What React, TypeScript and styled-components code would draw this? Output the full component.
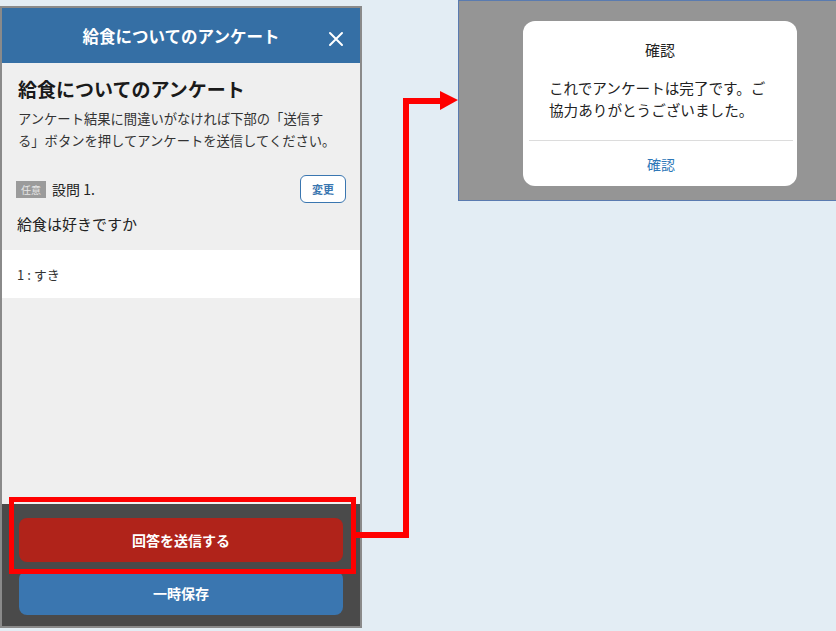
import React from 'react';
import styled, { createGlobalStyle } from 'styled-components';

const GlobalStyle = createGlobalStyle`
  html, body {
    margin: 0;
    padding: 0;
    background: #e3edf4;
    font-family: 'Noto Sans CJK JP', 'Noto Sans', sans-serif;
  }
`;

const Canvas = styled.div`
  position: relative;
  width: 836px;
  height: 631px;
  display: flex;
  align-items: flex-start;
  overflow: hidden;
`;

/* ---------- phone screen ---------- */

const Phone = styled.div`
  flex-shrink: 0;
  margin-top: 6px;
  width: 358px;
  height: 618px;
  border: 2px solid #8a8a8a;
  display: flex;
  flex-direction: column;
  background: #efefef;
`;

const Header = styled.div`
  height: 55px;
  flex-shrink: 0;
  background: #356fa5;
  color: #fff;
  display: flex;
  align-items: center;
  justify-content: center;
  position: relative;
  font-size: 16.5px;
  font-weight: 700;
`;

const CloseButton = styled.div`
  position: absolute;
  right: 16px;
  top: 20px;
  width: 16px;
  height: 16px;
`;

const Body = styled.div`
  flex: 1;
  display: flex;
  flex-direction: column;
`;

const Intro = styled.div`
  padding: 11px 16px 0 16px;
`;

const PageTitle = styled.h1`
  margin: 0;
  font-size: 19px;
  font-weight: 700;
  color: #1a1a1a;
  line-height: 30px;
`;

const Lead = styled.p`
  margin: 4px 0 0 0;
  font-size: 13.3px;
  line-height: 22px;
  color: #333;
`;

const QuestionHead = styled.div`
  display: flex;
  align-items: center;
  justify-content: space-between;
  padding: 0 14px 0 14px;
  margin-top: 23px;
`;

const QuestionLabel = styled.div`
  display: flex;
  align-items: center;
  gap: 6px;
  font-size: 14px;
  color: #222;
`;

const Badge = styled.span`
  background: #9b9b9b;
  color: #e6e6e6;
  font-size: 10px;
  padding: 0 5px;
  height: 17px;
  line-height: 17px;
`;

const EditButton = styled.button`
  width: 46px;
  height: 28px;
  border: 1px solid #3a76b0;
  border-radius: 6px;
  background: #fff;
  color: #3a76b0;
  font-family: inherit;
  font-size: 11px;
  font-weight: 700;
  padding: 0;
`;

const QuestionText = styled.div`
  padding: 0 15px;
  margin-top: 9px;
  font-size: 15px;
  color: #222;
  line-height: 24px;
`;

const Answer = styled.div`
  margin-top: 14px;
  background: #fff;
  height: 48px;
  display: flex;
  align-items: center;
  padding: 0 15px;
  font-size: 13px;
  color: #333;
`;

const Footer = styled.div`
  flex-shrink: 0;
  background: #4a4a4a;
  padding: 14px 17px 11px 17px;
  display: flex;
  flex-direction: column;
  gap: 9px;
`;

const ActionButton = styled.button<{ $tone: 'send' | 'save' }>`
  height: 44px;
  border: none;
  border-radius: 8px;
  background: ${p => (p.$tone === 'send' ? '#b0231a' : '#3a76b0')};
  color: #fff;
  font-family: inherit;
  font-size: 14px;
  font-weight: 700;
`;

/* ---------- confirm dialog panel ---------- */

const Panel = styled.div`
  flex-shrink: 0;
  margin-left: 96px;
  width: 380px;
  height: 199px;
  border: 1px solid #5a7bb0;
  border-right: none;
  background: #959595;
  display: flex;
`;

const Dialog = styled.div`
  margin: 20px 0 0 64px;
  width: 274px;
  height: 165px;
  background: #fff;
  border-radius: 12px;
  display: flex;
  flex-direction: column;
`;

const DialogTitle = styled.div`
  text-align: center;
  margin-top: 17px;
  font-size: 15px;
  color: #222;
  line-height: 24px;
`;

const DialogMessage = styled.div`
  padding: 0 22px 0 26px;
  margin-top: 15px;
  font-size: 14.6px;
  color: #222;
  line-height: 22px;
`;

const DialogAction = styled.div`
  margin: auto 4px 0 6px;
  border-top: 1px solid #dcdcdc;
  height: 45px;
  display: flex;
  align-items: center;
  justify-content: center;
  font-size: 14px;
  color: #2f78b8;
`;

/* ---------- annotation overlay ---------- */

const Highlight = styled.div`
  position: absolute;
  left: 9px;
  top: 497px;
  width: 337px;
  height: 67px;
  border: 5px solid #ff0000;
`;

const Connector = styled.svg`
  position: absolute;
  left: 0;
  top: 0;
  pointer-events: none;
`;

export default function App() {
  return (
    <>
      <GlobalStyle />
      <Canvas>
        <Phone>
          <Header>
            給食についてのアンケート
            <CloseButton>
              <svg width="16" height="16" viewBox="0 0 16 16">
                <path d="M2 2 L14 14 M14 2 L2 14" stroke="#fff" strokeWidth="2" strokeLinecap="round" />
              </svg>
            </CloseButton>
          </Header>
          <Body>
            <Intro>
              <PageTitle>給食についてのアンケート</PageTitle>
              <Lead>
                アンケート結果に間違いがなければ下部の「送信す
                <br />
                る」ボタンを押してアンケートを送信してください。
              </Lead>
            </Intro>
            <QuestionHead>
              <QuestionLabel>
                <Badge>任意</Badge>
                設問 1.
              </QuestionLabel>
              <EditButton>変更</EditButton>
            </QuestionHead>
            <QuestionText>給食は好きですか</QuestionText>
            <Answer>1 : すき</Answer>
          </Body>
          <Footer>
            <ActionButton $tone="send">回答を送信する</ActionButton>
            <ActionButton $tone="save">一時保存</ActionButton>
          </Footer>
        </Phone>

        <Panel>
          <Dialog>
            <DialogTitle>確認</DialogTitle>
            <DialogMessage>
              これでアンケートは完了です。ご
              <br />
              協力ありがとうございました。
            </DialogMessage>
            <DialogAction>確認</DialogAction>
          </Dialog>
        </Panel>

        <Highlight />
        <Connector width="836" height="631" viewBox="0 0 836 631">
          <polyline
            points="355,535 406,535 406,101 442,101"
            fill="none"
            stroke="#ff0000"
            strokeWidth="6"
          />
          <polygon points="440,91 458,100 440,110" fill="#ff0000" />
        </Connector>
      </Canvas>
    </>
  );
}
